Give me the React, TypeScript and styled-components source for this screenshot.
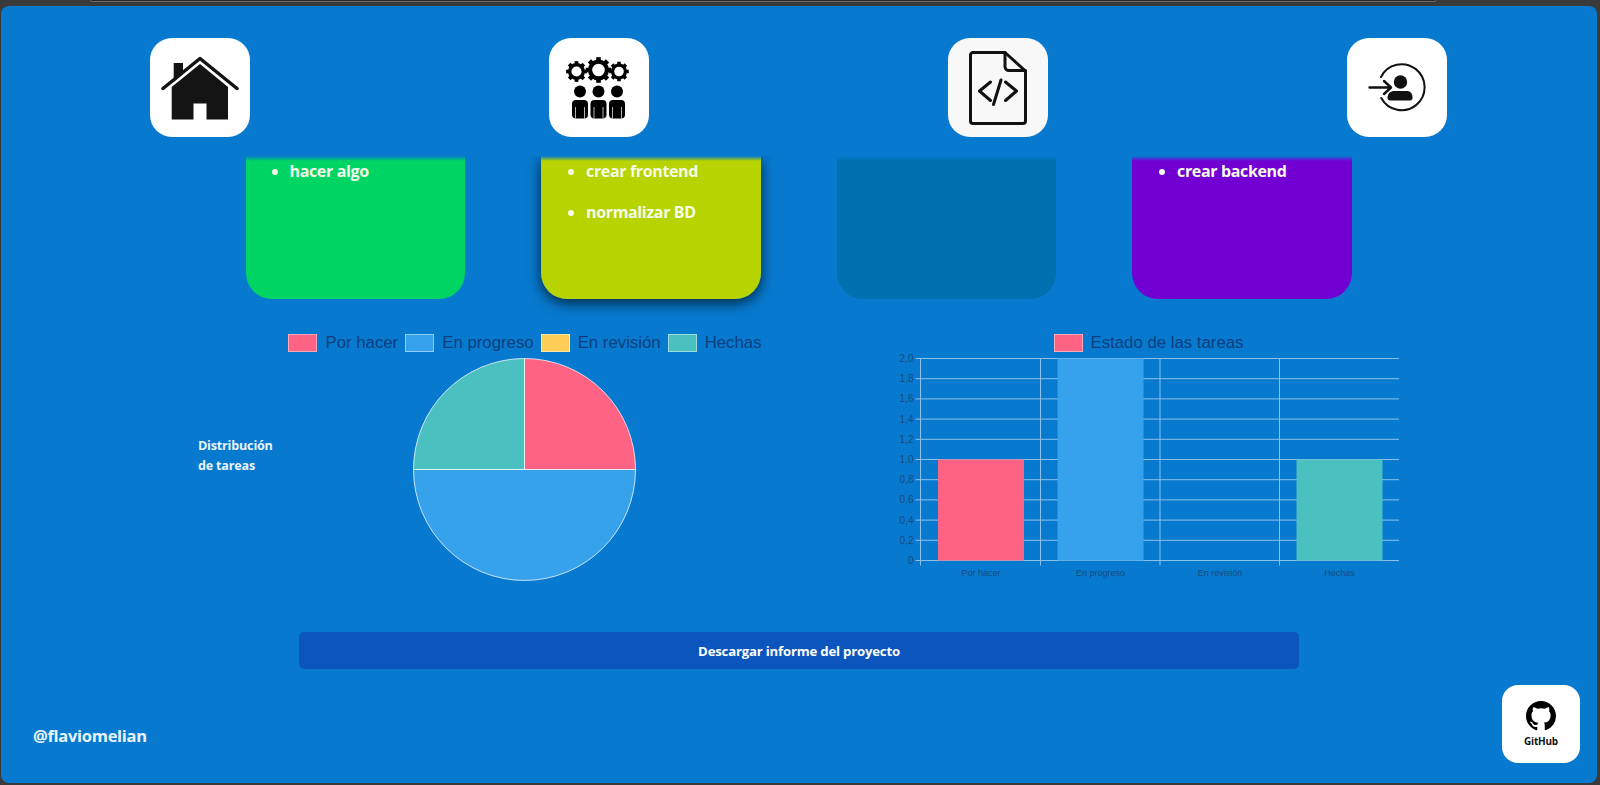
import React from "react";
import styled, { createGlobalStyle } from "styled-components";

const Global = createGlobalStyle`
  html, body { margin: 0; padding: 0; height: 100%; background: #3a3a3a; overflow: hidden; }
  * { box-sizing: border-box; }
`;

const uiFont = `"Open Sans", "Noto Sans", "Liberation Sans", sans-serif`;
const chartFont = `"Liberation Sans", Arial, sans-serif`;

const Chrome = styled.div`
  height: 6px;
  padding: 0 164px 0 90px;
`;
const AddressEdge = styled.div`
  height: 2px;
  background: #2a2a2a;
  border: solid #6b6b6b;
  border-width: 0 1px 1px 1px;
  border-radius: 0 0 6px 6px;
`;

const Page = styled.main`
  margin: 0 3px 0 1px;
  height: 777px;
  background: #077acf;
  border-radius: 8px;
  display: flex;
  flex-direction: column;
  font-family: ${uiFont};
`;

const Nav = styled.nav`
  display: flex;
  gap: 299px;
  padding: 32px 0 0 149px;
`;
const NavButton = styled.a<{ $bg?: string }>`
  width: 100px;
  height: 99px;
  border-radius: 22px;
  background: ${(p) => p.$bg || "#fff"};
  display: flex;
  align-items: center;
  justify-content: center;
  flex: none;
`;

const Board = styled.section`
  display: flex;
  gap: 76px;
  margin-top: 19px;
  padding-left: 244.5px;
`;
const Column = styled.div<{ $color: string; $shadow?: boolean }>`
  width: 219.5px;
  height: 143px;
  border-radius: 0 0 26px 26px;
  background: linear-gradient(#077acf 0, ${(p) => p.$color} 5px);
  box-shadow: ${(p) => (p.$shadow ? "0 4px 14px rgba(0,0,0,.7)" : "none")};
  clip-path: inset(0 -30px -30px -30px);
`;
const TaskList = styled.ul<{ $left: number }>`
  margin: 0;
  padding: 3px 0 0 ${(p) => p.$left}px;
  list-style: disc;
  color: #f4fbe9;
  font-size: 16px;
  font-weight: 700;
  letter-spacing: -0.35px;
`;
const Task = styled.li`
  height: 41px;
  line-height: 25px;
`;

const Charts = styled.section`
  display: flex;
  margin-top: 32px;
  padding-left: 197px;
`;
const ChartTitle = styled.h3`
  width: 90px;
  flex: none;
  margin: 105px 0 0;
  font-size: 12.6px;
  line-height: 20px;
  font-weight: 700;
  color: #e8f4ff;
  letter-spacing: -0.2px;
`;
const PieBlock = styled.div`
  width: 474px;
  flex: none;
  display: flex;
  flex-direction: column;
  align-items: center;
`;
const BarBlock = styled.div`
  width: 507px;
  margin-left: 133px;
  flex: none;
  display: flex;
  flex-direction: column;
  align-items: center;
`;
const Legend = styled.div`
  display: flex;
  gap: 7px;
  height: 24px;
  margin-bottom: 3px;
  align-items: center;
  font-family: ${chartFont};
  font-size: 16.8px;
  color: #0b3f7e;
  white-space: nowrap;
`;
const LegendItem = styled.span`
  display: flex;
  align-items: center;
  gap: 8px;
`;
const Swatch = styled.i<{ $color: string }>`
  display: block;
  width: 29px;
  height: 18px;
  background: ${(p) => p.$color};
  border: 1px solid rgba(255, 255, 255, 0.45);
`;
const PlotSvg = styled.svg`
  display: block;
  flex: none;
`;
const BarSvg = styled(PlotSvg)`
  margin-top: -6px;
`;

const ExportButton = styled.button`
  align-self: flex-start;
  margin: 49px 0 0 298px;
  width: 1000px;
  height: 37px;
  border: 0;
  border-radius: 5px;
  background: #0b55bd;
  color: #fff;
  font-family: ${uiFont};
  font-size: 13.2px;
  font-weight: 700;
  letter-spacing: -0.2px;
`;

const Footer = styled.footer`
  display: flex;
  justify-content: space-between;
  align-items: center;
  margin-top: 16px;
  padding: 0 17px 0 32px;
`;
const Handle = styled.span`
  margin-top: 22px;
  font-size: 16.5px;
  font-weight: 700;
  color: #e8f4ff;
  letter-spacing: -0.3px;
`;
const GitHubBadge = styled.a`
  width: 78px;
  height: 78px;
  border-radius: 16px;
  background: #fff;
  display: flex;
  flex-direction: column;
  align-items: center;
  padding-top: 16px;
  color: #111;
`;
const GitHubLabel = styled.span`
  font-size: 10px;
  line-height: 12px;
  font-weight: 700;
  letter-spacing: -0.2px;
  margin-top: 4px;
`;

const HomeIcon = () => (
  <svg width="78" height="66" viewBox="0 0 78 66">
    <path d="M12.700 8H22v11l-9.300 8z" fill="#141414" />
    <path d="M2 33.500 39 3.500l37 30" fill="none" stroke="#141414" strokeWidth="3.500" strokeLinecap="round" strokeLinejoin="round" />
    <path d="M39 9 67 32v32.500H45.500V48.500H32.500V64.500H10.700V32z" fill="#141414" />
  </svg>
);

const Gear = ({ x, y, r }: { x: number; y: number; r: number }) => {
  const teeth = Array.from({ length: 8 }, (_, i) => i * 45);
  return (
    <g transform={`translate(${x} ${y})`}>
      {teeth.map((a) => (
        <rect key={a} x={-r * 0.22} y={-r * 1.22} width={r * 0.44} height={r * 0.5} fill="#000" transform={`rotate(${a})`} />
      ))}
      <circle r={r * 0.8} fill="none" stroke="#000" strokeWidth={r * 0.4} />
    </g>
  );
};

const Person = ({ x }: { x: number }) => (
  <g>
    <circle cx={x} cy="35.500" r="6" fill="#000" />
    <rect x={x - 8} y="44" width="16" height="18.500" rx="4" fill="#000" />
    <path d={`M${x - 4.5} 51v11.500M${x + 4.5} 51v11.500`} stroke="#fff" strokeWidth=".7" />
  </g>
);

const TeamIcon = () => (
  <svg width="66" height="64" viewBox="0 0 66 64">
    <Gear x={10.5} y={15.5} r={8.5} />
    <Gear x={32.5} y={14} r={10.5} />
    <Gear x={53} y={15.5} r={8} />
    <Person x={14} />
    <Person x={32.5} />
    <Person x={51} />
  </svg>
);

const CodeFileIcon = () => (
  <svg width="60" height="74" viewBox="0 0 60 74" fill="none" stroke="#111" strokeWidth="3" strokeLinecap="round" strokeLinejoin="round">
    <path d="M5 1.500h32l20.500 18.500v50a2.500 2.500 0 0 1-2.500 2.500H5a2.500 2.500 0 0 1-2.500-2.500V4A2.500 2.500 0 0 1 5 1.500z" />
    <path d="M37 1.500v14a4 4 0 0 0 4 4h16.500" />
    <path d="M22.500 31 11.500 40l11 9.500M37.500 31l11 9-11 9.500M33 29l-7.500 24.500" />
  </svg>
);

const LoginIcon = () => (
  <svg width="58" height="52" viewBox="0 0 58 52" fill="none">
    <path d="M13 15A23 23 0 1 1 13.300 36" stroke="#111" strokeWidth="2" strokeLinecap="round" />
    <path d="M1.500 25.500h20M16 19l7 6.500-7 6.500" stroke="#111" strokeWidth="2.400" strokeLinecap="round" strokeLinejoin="round" />
    <circle cx="32.500" cy="20" r="6.700" fill="#111" />
    <path d="M19.500 36c0-4.500 3-7 7-7h12c4 0 6 2.500 6 7 0 1.500-1 2.500-2.500 2.500h-20c-1.500 0-2.500-1-2.500-2.500z" fill="#111" />
  </svg>
);

const GitHubMark = () => (
  <svg width="30" height="30" viewBox="0 0 16 16" fill="#000">
    <path d="M8 0C3.580 0 0 3.580 0 8c0 3.540 2.290 6.530 5.470 7.590.4.070.55-.17.55-.38 0-.19-.01-.82-.01-1.490-2.010.37-2.530-.49-2.690-.94-.09-.23-.48-.94-.82-1.130-.28-.15-.68-.52-.01-.53.63-.01 1.080.58 1.230.82.72 1.210 1.870.87 2.330.66.070-.52.28-.87.51-1.070-1.780-.2-3.640-.89-3.640-3.950 0-.87.31-1.590.82-2.150-.08-.2-.36-1.020.08-2.120 0 0 .67-.21 2.200.82.64-.18 1.320-.27 2-.27s1.360.09 2 .27c1.530-1.040 2.200-.82 2.200-.82.44 1.100.16 1.920.08 2.120.51.56.82 1.270.82 2.150 0 3.070-1.870 3.750-3.650 3.950.29.25.54.73.54 1.480 0 1.070-.01 1.930-.01 2.200 0 .21.15.46.55.38A8.010 8.010 0 0 0 16 8c0-4.420-3.580-8-8-8z" />
  </svg>
);

const PIE = { cx: 111.5, cy: 111.5, r: 111 };
const PieChart = () => {
  const { cx, cy, r } = PIE;
  return (
    <PlotSvg width="224" height="224" viewBox="0 0 224 224" stroke="rgba(255,255,255,.75)" strokeWidth="1">
      <path d={`M${cx} ${cy}V${cy - r}A${r} ${r} 0 0 1 ${cx + r} ${cy}z`} fill="#ff6384" />
      <path d={`M${cx} ${cy}H${cx + r}A${r} ${r} 0 0 1 ${cx - r} ${cy}z`} fill="#36a2eb" />
      <path d={`M${cx} ${cy}H${cx - r}A${r} ${r} 0 0 1 ${cx} ${cy - r}z`} fill="#4bc0c0" />
    </PlotSvg>
  );
};

const ticks = ["2,0", "1,8", "1,6", "1,4", "1,2", "1,0", "0,8", "0,6", "0,4", "0,2", "0"];
const categories = [
  { name: "Por hacer", value: 1, color: "#ff6384", x: 43 },
  { name: "En progreso", value: 2, color: "#36a2eb", x: 162.5 },
  { name: "En revisión", value: 0, color: "#ffce56", x: 282 },
  { name: "Hechas", value: 1, color: "#4bc0c0", x: 401.5 },
];
const BarChart = () => {
  const left = 25.5, right = 504, top = 0.5, bottom = 202.5;
  const step = (bottom - top) / 10;
  return (
    <BarSvg width="507" height="231" viewBox="0 -6 507 231" fontFamily={chartFont} fill="#174a80">
      {ticks.map((t, i) => {
        const y = top + i * step;
        return (
          <g key={t}>
            <line x1={left - 5} x2={right} y1={y} y2={y} stroke="#8cc0ea" />
            <text x={left - 7} y={y + 3.5} textAnchor="end" fontSize="10">{t}</text>
          </g>
        );
      })}
      {[left, 145.5, 265, 384.5].map((x) => (
        <line key={x} x1={x} x2={x} y1={top} y2={bottom + 5} stroke="#8cc0ea" />
      ))}
      {categories.map((c) => (
        <g key={c.name}>
          {c.value > 0 && (
            <rect x={c.x} y={bottom - c.value * 5 * step} width="86" height={c.value * 5 * step} fill={c.color} />
          )}
          <text x={c.x + 43} y={bottom + 15.5} textAnchor="middle" fontSize="9">{c.name}</text>
        </g>
      ))}
    </BarSvg>
  );
};

const legendItems = categories.map((c) => ({ label: c.name, color: c.color }));

export default function App() {
  return (
    <>
      <Global />
      <Chrome><AddressEdge /></Chrome>
      <Page>
        <Nav>
          <NavButton><HomeIcon /></NavButton>
          <NavButton><TeamIcon /></NavButton>
          <NavButton $bg="#f8f8f8"><CodeFileIcon /></NavButton>
          <NavButton><LoginIcon /></NavButton>
        </Nav>
        <Board>
          <Column $color="#00d463">
            <TaskList $left={44}><Task>hacer algo</Task></TaskList>
          </Column>
          <Column $color="#b7d300" $shadow>
            <TaskList $left={45}><Task>crear frontend</Task><Task>normalizar BD</Task></TaskList>
          </Column>
          <Column $color="#0070b0" />
          <Column $color="#7300d3">
            <TaskList $left={45}><Task>crear backend</Task></TaskList>
          </Column>
        </Board>
        <Charts>
          <ChartTitle>Distribución<br />de tareas</ChartTitle>
          <PieBlock>
            <Legend>
              {legendItems.map((l) => (
                <LegendItem key={l.label}><Swatch $color={l.color} />{l.label}</LegendItem>
              ))}
            </Legend>
            <PieChart />
          </PieBlock>
          <BarBlock>
            <Legend>
              <LegendItem><Swatch $color="#ff6384" />Estado de las tareas</LegendItem>
            </Legend>
            <BarChart />
          </BarBlock>
        </Charts>
        <ExportButton>Descargar informe del proyecto</ExportButton>
        <Footer>
          <Handle>@flaviomelian</Handle>
          <GitHubBadge>
            <GitHubMark />
            <GitHubLabel>GitHub</GitHubLabel>
          </GitHubBadge>
        </Footer>
      </Page>
    </>
  );
}
